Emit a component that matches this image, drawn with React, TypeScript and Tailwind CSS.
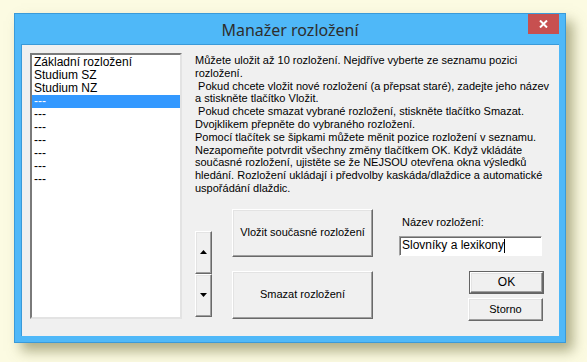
import React from 'react';

// Layout manager dialog (Win8 style frame, classic controls inside)
const layouts = ['Základní rozložení', 'Studium SZ', 'Studium NZ', '---', '---', '---', '---', '---', '---', '---'];

const helpLines = [
  'Můžete uložit až 10 rozložení. Nejdříve vyberte ze seznamu pozici',
  'rozložení.',
  '\u00a0Pokud chcete vložit nové rozložení (a přepsat staré), zadejte jeho název',
  'a stiskněte tlačítko Vložit.',
  '\u00a0Pokud chcete smazat vybrané rozložení, stiskněte tlačítko Smazat.',
  'Dvojklikem přepněte do vybraného rozložení.',
  'Pomocí tlačítek se šipkami můžete měnit pozice rozložení v seznamu.',
  'Nezapomeňte potvrdit všechny změny tlačítkem OK. Když vkládáte',
  'současné rozložení, ujistěte se že NEJSOU otevřena okna výsledků',
  'hledání. Rozložení ukládají i předvolby kaskáda/dlaždice a automatické',
  'uspořádání dlaždic.',
];

const raised =
  'bg-[#f0f0f0] border-t border-l border-t-white border-l-white border-b border-r border-b-[#696969] border-r-[#696969] shadow-[inset_-1px_-1px_0_#a0a0a0,inset_1px_1px_0_#e3e3e3]';

function ClassicButton({ label, className }: { label: string; className: string }) {
  return (
    <button className={`${raised} flex items-center justify-center text-black ${className}`}>
      {label}
    </button>
  );
}

function ArrowButton({ up }: { up: boolean }) {
  return (
    <button className={`${raised} w-[17px] h-[43px] flex items-center justify-center`}>
      <svg width="7" height="4" viewBox="0 0 7 4">
        {up ? <polygon points="3.5,0 7,4 0,4" fill="#000" /> : <polygon points="0,0 7,0 3.5,4" fill="#000" />}
      </svg>
    </button>
  );
}

export default function App() {
  return (
    <div
      className="w-[587px] h-[362px] bg-[#fcfbe2] pt-[13px] pl-[14px] overflow-hidden"
      style={{ fontFamily: '"Liberation Sans", Arial, sans-serif' }}
    >
      <div className="w-[552px] h-[330px] bg-[#4fb8f8] border border-[#3a9ad9] flex flex-col shadow-[7px_8px_12px_rgba(110,110,60,0.55)]">
        {/* title bar */}
        <div className="h-[30px] flex items-center relative shrink-0">
          <div
            className="flex-1 text-center text-[16px] text-[#2e2e2e] pt-[1px]"
            style={{ fontFamily: '"Noto Sans", "Open Sans", sans-serif' }}
          >
            Manažer rozložení
          </div>
          <div className="absolute right-[6px] top-0 w-[31px] h-[20px] bg-[#c75050] flex items-center justify-center">
            <svg width="9" height="8" viewBox="0 0 9 8">
              <path d="M1 0.5 L8 7.5 M8 0.5 L1 7.5" stroke="#fff" strokeWidth="2" />
            </svg>
          </div>
        </div>

        {/* client area */}
        <div className="mx-[6px] mb-[6px] flex-1 bg-[#f0f0f0] border border-[#3a9ad9] border-r-0 border-b-0 flex pl-[8px] pt-[8px] text-[11px] leading-[13px] text-black">
          {/* list box */}
          <div className="w-[152px] h-[266px] bg-white border-t-2 border-l-2 border-t-[#7a7a7a] border-l-[#7a7a7a] border-b-2 border-r-2 border-b-[#e3e3e3] border-r-[#e3e3e3] pt-[1px] text-[12px]">
            {layouts.map((name, i) => (
              <div
                key={i}
                className={`h-[13px] leading-[13px] pl-[2px] whitespace-nowrap ${i === 3 ? 'bg-[#3399ff] text-white' : 'text-black'}`}
              >
                {name}
              </div>
            ))}
          </div>

          {/* right side */}
          <div className="ml-[13px] flex flex-col">
            <div className="pt-[1px]">
              {helpLines.map((line, i) => (
                <div key={i} className="whitespace-nowrap h-[12.8px]">
                  {line}
                </div>
              ))}
            </div>

            <div className="flex mt-[14px]">
              <div className="flex flex-col mt-[22px]">
                <ArrowButton up />
                <ArrowButton up={false} />
              </div>
              <div className="flex flex-col ml-[20px] gap-[14px]">
                <ClassicButton label="Vložit současné rozložení" className="w-[141px] h-[48px]" />
                <ClassicButton label="Smazat rozložení" className="w-[141px] h-[48px]" />
              </div>
              <div className="flex flex-col ml-[26px]">
                <div className="mt-[7px] ml-[3px] h-[13px]">Název rozložení:</div>
                <div className="mt-[7px] w-[143px] h-[20px] bg-white border-t border-l border-t-[#a0a0a0] border-l-[#a0a0a0] border-b border-r border-b-white border-r-white shadow-[inset_1px_1px_0_#696969] flex items-center pl-[2px] text-[12px]">
                  <span>Slovníky a lexikony</span>
                  <span className="w-[1px] h-[14px] bg-black" />
                </div>
                <div className="flex flex-col items-end mt-[15px] mr-[-2px]">
                  <button className="w-[75px] h-[23px] border border-[#646464] flex">
                    <span className={`${raised} flex-1 flex items-center justify-center text-[12px]`}>OK</span>
                  </button>
                  <ClassicButton label="Storno" className="w-[75px] h-[23px] mt-[4px] mr-[1px]" />
                </div>
              </div>
            </div>
          </div>
        </div>
      </div>
    </div>
  );
}
